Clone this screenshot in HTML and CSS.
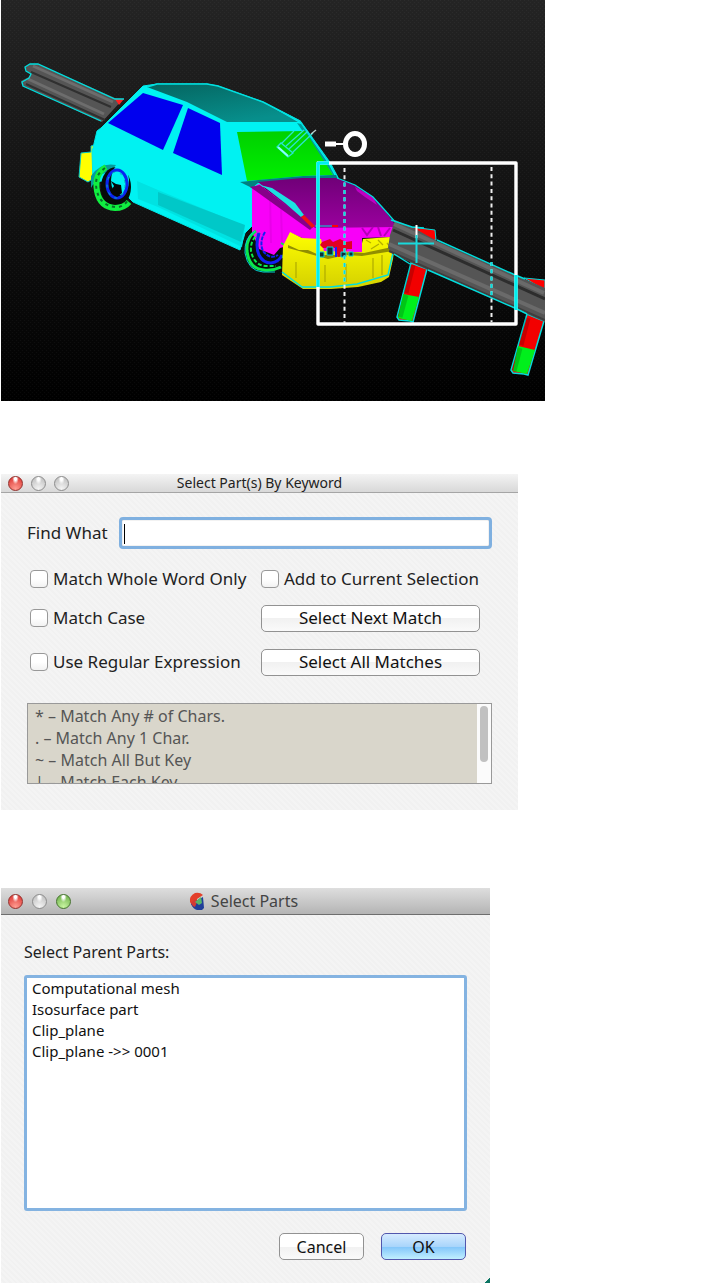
FILE: index.html
```
<!DOCTYPE html>
<html lang="en">
<head>
<meta charset="utf-8">
<title>Select Parts</title>
<link rel="stylesheet" href="styles.css">
</head>
<body>
<main class="page">
<svg class="viewport" viewBox="1 0 544 401" role="img" aria-label="Car model against a guard rail with a selection rectangle">
  <defs>
    <linearGradient id="bg" x1="0" y1="0" x2="0" y2="1"><stop offset="0" stop-color="#242424"/><stop offset=".5" stop-color="#121212"/><stop offset="1" stop-color="#000"/></linearGradient>
    <linearGradient id="roof" x1="0" y1="0" x2=".6" y2="1"><stop offset="0" stop-color="#056560"/><stop offset="1" stop-color="#078f8c"/></linearGradient>
    <linearGradient id="hood" x1="0" y1="0" x2="0" y2="1"><stop offset="0" stop-color="#700078"/><stop offset="1" stop-color="#9a009e"/></linearGradient>
    <linearGradient id="glass" x1="0" y1="0" x2="0" y2="1"><stop offset="0" stop-color="#00d000"/><stop offset="1" stop-color="#00f000"/></linearGradient>
    <linearGradient id="bumper" x1="0" y1="0" x2="0" y2="1"><stop offset="0" stop-color="#ff0"/><stop offset="1" stop-color="#d4d000"/></linearGradient>
    <pattern id="dots" width="4" height="4" patternUnits="userSpaceOnUse"><path d="M0 0h1v1h-1zM2 2h1v1h-1z" fill="#fff" opacity=".035"/></pattern>
  </defs>
  <path d="M1 0h544v401H1z" fill="url(#bg)"/>
  <path d="M1 0h544v401H1z" fill="url(#dots)"/>
  <!-- rear guard rail -->
  <path d="M25 67l5-3 8 0 77 34 8 1-21 23-3-1-77-36-1-4 8-4 2-3-4-3z" fill="#555"/>
  <path d="M28 79l76 35M33 66l80 36" stroke="#6d6d6d" stroke-width="3"/>
  <path d="M31 72l80 35M26 84l79 36" stroke="#303030" stroke-width="2"/>
  <path d="M115 99h9l-5 6z" fill="#f22"/>
  <path d="M124 99h-9L38 64h-8l-5 3 1 4 5 3-2 4-7 4 1 4 78 35" fill="none" stroke="#00dede" stroke-width="1.3"/>
  <!-- body -->
  <path d="M91 146l5-1v34l-5 1-3 2-9-5 2-24 10-1z" fill="#ff0" stroke="#0cc"/>
  <path d="M143 86l14-2h50l11 2 45 16 37 19 30 42 8 15-38 6-44 3-4-1 3 37-10 10-5 17-60-27-47-21-18-18-14-3-8 3-1-32 5-21 4-3z" fill="#00f2f2" stroke="#00e8e8"/>
  <path d="M147 87l10-3h50l11 2 45 16 35 20-71 0-40-20z" fill="url(#roof)"/>
  <path d="M147 87l10-3h50l11 2 45 16 37 19 30 42 8 15" fill="none" stroke="#00e0e0" stroke-width="1.5"/>
  <path d="M137 181l21 9 87 36-3 21-84-40-20-8z" fill="#00e2e2"/>
  <path d="M158 192l87 33-4 17-83-37z" fill="#00c8c8"/>
  <path d="M297 123l4 1 27 39 8 15-32 0 29-3z" fill="#009c9c"/>
  <path d="M143 93l40 12-20 45-55-27z" fill="#0000ee"/>
  <path d="M188 108l32 15 2 52-49-22z" fill="#0000ee"/>
  <path d="M237 132l68-1 28 44-30 1-56 5z" fill="url(#glass)"/>
  <path d="M240 182l18-2 45-4 33-1 2 5-80 3-6 5z" fill="#007f80"/>
  <!-- wheels -->
  <path d="M91 176q9-14 25-11l-4 5-14 6-7 12z" fill="#079b9b"/>
  <ellipse cx="116" cy="187" rx="15" ry="20" fill="#060b08"/>
  <ellipse cx="120" cy="180" rx="9" ry="15" fill="#00f2f2"/>
  <path d="M106 167q-12 7-9 24 3 16 18 17 9 0 14-6" fill="none" stroke="#10ef40" stroke-width="6"/>
  <path d="M105 168q-12 8-8 23 3 14 18 16 8 1 13-7" fill="none" stroke="#086c28" stroke-width="2" stroke-dasharray="3 4"/>
  <ellipse cx="117" cy="184" rx="10" ry="14" fill="none" stroke="#0b25ef" stroke-width="3"/>
  <ellipse cx="116" cy="185" rx="9" ry="13" fill="none" stroke="#0bb" stroke-width="1" stroke-dasharray="3 5"/>
  <path d="M111 181l5 3 5 1 1 8-5 4-6-6 3-5z" fill="#050808"/>
  <ellipse cx="264" cy="252" rx="17" ry="18" fill="#061008"/>
  <!-- hood and nose -->
  <path d="M252 188l7-4 56 43 81-1-2 11-32 1v17l-42-1-18-16-11-5-4 13-7 2-6 7-15-6-7-17z" fill="#f800f8"/>
  <path d="M270 196l1 47M281 206l1 38" stroke="#e900e9" stroke-width="2"/>
  <path d="M258 182l44-4h35l18 7 18 12 9 10 15 20-82 1-5-4-13-9z" fill="url(#hood)"/>
  <path d="M250 187l10-2 41 32 12 10-3 3z" fill="#860089"/>
  <path d="M260 185l12 3 23 15 9 12-3 2-16-14-18-14z" fill="#1ce1e1"/>
  <path d="M304 215l11 11-3 2-11-11z" fill="#ef1111"/>
  <path d="M355 187l18 10 4 8-12-8-8-6z" fill="#c000c4"/>
  <path d="M337 178l18 7 18 12 9 10 15 17" fill="none" stroke="#00dede" stroke-width="1.3"/>
  <path d="M362 228l5 7 6-8M378 227l3 9M384 236l6-8" fill="none" stroke="#b500b8" stroke-width="2"/>
  <!-- front wheel rings -->
  <path d="M256 231q-10 6-9 20 2 18 17 19 9 1 17-3" fill="none" stroke="#0be84c" stroke-width="3"/>
  <path d="M260 233q-10 6-9 18 3 14 14 15l11 0" fill="none" stroke="#0be84c" stroke-width="2" stroke-dasharray="4 2"/>
  <path d="M255 231q-11 7-10 22 3 18 18 19h12" fill="none" stroke="#00cfd2"/>
  <path d="M259 233q-4 13 0 22 4 8 12 8 8-1 11-8" fill="none" stroke="#1020f2" stroke-width="3"/>
  <path d="M265 232q-6 10-2 19 7 9 15 4" fill="none" stroke="#1020f2" stroke-width="2" stroke-dasharray="4 1"/>
  <path d="M281 243l5 3-3 12" fill="none" stroke="#0be84c" stroke-width="2"/>
  <path d="M290 232l12 6 19 1 3 12 36 1 3-13 27-2 5 6-2 16-4 18-8 5-23 5-27 2h-28l-21-14 1-29z" fill="url(#bumper)"/>
  <path d="M288 245l11 5 9 0 11 5 18 0 12-3 15 1 28-6 1 4-31 5-16-1-18 4-29-8-11-3z" fill="#918e00"/>
  <path d="M366 240l5 3M378 240l5 5M371 249l8-5M387 243l4 5M296 262v16M325 265v17M346 264v18M373 258v20M382 255v20" fill="none" stroke="#b3af00" stroke-width="1.3"/>
  <path d="M350 239h12v13h-11z" fill="#f800f8"/>
  <path d="M322 242l8-3 3 3 7-3 6 3 6-1v8h-5l-3 7-6 1-3-9h-12l-3-3z" fill="#e10022"/>
  <path d="M318 252h6v5h-6zm9-5h6v8h-6zm14 5h5v5h-5zm8 0h4v4h-4z" fill="#102f36" stroke="#00d5d5"/>
  <path d="M336 247v10" stroke="#1424ff" stroke-width="2"/>
  <path d="M282 272l20 15 28 0 27-3 31-9 5-22" fill="none" stroke="#00dede" stroke-width="1.5"/>
  <path d="M315 226h19" stroke="#00d8d8"/>
  <path d="M332 226h6" stroke="#f00" stroke-width="2"/>
  <!-- front guard rail and posts -->
  <path d="M411 263l16 6-14 53-3-1-11-1-2-3z" fill="#f20000" stroke="#00dede" stroke-width="1.5"/>
  <path d="M403 294l16 3-7 24-14-3z" fill="#00ef1c"/>
  <path d="M413 265l-7 28M406 295l-6 22" stroke="#000" opacity=".17" stroke-width="5"/>
  <path d="M527 314l17 7-16 54-4-1-11-1-2-3z" fill="#f20000" stroke="#00dede" stroke-width="1.5"/>
  <path d="M518 346l17 4-8 24-14-3z" fill="#00ef1c"/>
  <path d="M528 318l-7 27M520 348l-6 23" stroke="#000" opacity=".17" stroke-width="5"/>
  <path d="M411 227l24 3 1 10-8 1z" fill="#f00" stroke="#00dede"/>
  <path d="M524 278l21 2v10z" fill="#f00" stroke="#00dede"/>
  <path d="M395 220l17 7 25 14 76 33 32 14v34l-29-13-88-39-34-15-6-7 2-13z" fill="#555"/>
  <path d="M394 224l150 69M389 244l156 69" stroke="#6a6a6a" stroke-width="4"/>
  <path d="M393 230l152 69" stroke="#2d2d2d" stroke-width="3"/>
  <path d="M389 251l156 69" stroke="#3e3e3e" stroke-width="2"/>
  <path d="M391 220l21 7 12 1M437 240l76 34 12 5M428 270l89 39 10 5M394 254l16 10" fill="none" stroke="#00dede" stroke-width="1.4"/>
  <!-- selection rectangle and cursors -->
  <path d="M318 163h198v161H318z" fill="none" stroke="#fff" stroke-width="3.400" stroke-linejoin="round"/>
  <path d="M318 162v125M516 275v35M318 163h11" stroke="#00f0f0" stroke-width="3.400"/>
  <path d="M344.500 168v155M491.500 167v155" stroke="#eee" stroke-width="2" stroke-dasharray="4 3.300"/>
  <path d="M344.500 182.600v102M491.500 262v36" stroke="#00dede" stroke-width="2" stroke-dasharray="4 3.300"/>
  <path d="M416.500 225v13" stroke="#fff" stroke-width="2"/>
  <path d="M416.500 235v28M398 243.500h36" stroke="#19d9dc" stroke-width="2"/>
  <path d="M277 147l4-4 12 10-5 4zM282 143l12-12M286 146l18-16M293 152l20-19M289 149l19-18" fill="none" stroke="#2be3cf" stroke-width="1.300"/>
  <path d="M278 147l10 9" stroke="#8ff" stroke-width="2"/><path d="M311 134l5-4" stroke="#bcc" stroke-width="1.500"/>
  <path d="M325 141.500h11v5h-11z" fill="#fff"/><path d="M336 144h9" stroke="#fff" stroke-width="2"/>
  <ellipse cx="355" cy="144" rx="9.500" ry="10.500" fill="none" stroke="#fff" stroke-width="5"/>
</svg>

<section class="window keyword-window" aria-label="Select Part(s) By Keyword">
  <header class="titlebar">
    <div class="lights"><button class="light red" aria-label="Close"></button><button class="light" aria-label="Minimize"></button><button class="light" aria-label="Zoom"></button></div>
    <h1 class="title">Select Part(s) By Keyword</h1>
  </header>
  <form class="keyword-body">
    <div class="find">
      <label for="find">Find What</label>
      <span class="find-box"><input id="find" type="text"><i class="caret"></i></span>
    </div>
    <div class="options">
      <label class="check"><input type="checkbox">Match Whole Word Only</label>
      <label class="check"><input type="checkbox">Add to Current Selection</label>
      <label class="check"><input type="checkbox">Match Case</label>
      <button type="button" class="button">Select Next Match</button>
      <label class="check"><input type="checkbox">Use Regular Expression</label>
      <button type="button" class="button">Select All Matches</button>
    </div>
    <div class="help">
      <ul class="help-lines"><li>* – Match Any # of Chars.</li><li>. – Match Any 1 Char.</li><li>~ – Match All But Key</li><li>| – Match Each Key</li></ul>
      <div class="track"><div class="thumb"></div></div>
    </div>
  </form>
</section>

<section class="window parts-window" aria-label="Select Parts">
  <header class="titlebar tall">
    <div class="lights"><button class="light red" aria-label="Close"></button><button class="light" aria-label="Minimize"></button><button class="light green" aria-label="Zoom"></button></div>
    <svg class="logo" viewBox="0 0 16 18" aria-hidden="true"><path d="M14 3Q11 0 6 1 0 4 1 10l3 5 4-4 0-4z" fill="#e3402b"/><path d="M2 12l5-3 7-4 1 11-2 2H8Q4 17 2 12z" fill="#203f99"/><path d="M2 11l4-4 2 3-2 5q-3-1-4-4z" fill="#d33a34"/><path d="M12 5l1 6-3 2-4-3z" fill="#58b56a"/></svg>
    <h1 class="title">Select Parts</h1>
  </header>
  <form class="parts-body">
    <label for="parts">Select Parent Parts:</label>
    <select id="parts" class="parts" multiple size="4"><option>Computational mesh</option><option>Isosurface part</option><option>Clip_plane</option><option>Clip_plane -&gt;&gt; 0001</option></select>
    <div class="actions"><button type="button" class="button">Cancel</button><button type="button" class="button primary">OK</button></div>
  </form>
</section>
</main>
</body>
</html>
```
FILE: styles.css
```
* { box-sizing: border-box; }
body { margin: 0; background: #fff; color: #222; font-family: "Noto Sans", "Open Sans", sans-serif; font-size: 17px; line-height: 22px; }
.page { display: flex; flex-direction: column; padding-left: 1px; }
.viewport { display: block; width: 100%; max-width: 544px; }
.window { width: 100%; background: repeating-linear-gradient(45deg, #f4f4f4 0 2px, #f1f1f1 2px 4px); }
.keyword-window { max-width: 517px; margin-top: 73px; }
.parts-window { max-width: 489px; margin-top: 78px; background: linear-gradient(315deg, #0c7563 0 4px, transparent 4px), repeating-linear-gradient(45deg, #f4f4f4 0 2px, #f1f1f1 2px 4px); }
.titlebar { position: relative; display: flex; align-items: center; justify-content: center; gap: 6px; height: 19px; border-bottom: 1px solid #a5a5a5; background: linear-gradient(#f4f4f4, #d8d8d8); }
.titlebar.tall { height: 27px; padding-right: 4px; border-bottom-color: #6e6e6e; background: linear-gradient(#dedede, #b4b4b4); }
.title { margin: 0; font-size: 14px; font-weight: 400; line-height: 16px; }
.tall .title { font-size: 16px; line-height: 22px; color: #444; }
.logo { width: 16px; height: 18px; }
.lights { position: absolute; left: 7px; display: flex; gap: 8px; }
.tall .lights { gap: 9px; }
.light { width: 15px; height: 15px; padding: 0; border: 1px solid #8d8d8d; border-radius: 50%; background: radial-gradient(ellipse at 50% 15%, #fff 0 12%, transparent 35%), radial-gradient(circle at 50% 90%, #f4f4f4, #b9b9b9); }
.light.red { border-color: #93312d; background: radial-gradient(ellipse at 50% 12%, #fff 0 12%, transparent 35%), radial-gradient(circle at 50% 90%, #ff9d92, #d92c29); }
.light.green { border-color: #46742f; background: radial-gradient(ellipse at 50% 12%, #fff 0 12%, transparent 35%), radial-gradient(circle at 50% 90%, #c9f5a2, #64a941); }
.keyword-body { padding: 24px 26px 26px; }
.find { display: flex; align-items: center; gap: 11px; }
.find-box { position: relative; flex: 1; display: flex; }
.find-box input { width: 100%; height: 32px; padding: 0 6px; border: 3px solid #7fb0e0; border-radius: 4px; background: #fff; font: inherit; outline: 0; box-shadow: inset 0 0 1px #777; }
.caret { position: absolute; left: 5px; top: 7px; width: 1px; height: 20px; background: #000; }
.options { display: grid; grid-template-columns: 234px 219px; grid-template-rows: 32px 46px 42px; align-items: center; margin: 14px 0 20px; }
.check { display: flex; align-items: center; gap: 5px; white-space: nowrap; }
.check input { appearance: none; flex: none; width: 18px; height: 18px; margin: 0; border: 1px solid #989898; border-radius: 4px; background: linear-gradient(#fff 50%, #f2f2f2); }
.check:nth-child(odd) input { margin-left: 3px; }
.button { height: 27px; padding: 0; border: 1px solid #929292; border-radius: 5px; background: linear-gradient(#fff 50%, #f1f1f1 50%, #fafafa); color: #111; font: inherit; line-height: 22px; }
.help { display: flex; height: 81px; overflow: hidden; border: 1px solid #999; background: #d9d6cb; font-size: 16px; }
.help-lines { flex: 1; margin: 0; padding: 1px 7px; list-style: none; color: #555; }
.track { width: 14px; padding: 2px 3px; background: #fbfbfb; }
.thumb { width: 8px; height: 56px; border-radius: 4px; background: #c1c1c1; }
.parts-body { display: flex; flex-direction: column; padding: 26px 23px 23px; font-size: 16px; }
.parts { height: 236px; margin: 12px 0 22px; padding: 0 5px; border: 3px solid #84b3e1; border-radius: 3px; background: #fff; color: #111; font: inherit; font-size: 15px; outline: 0; overflow: hidden; }
.parts option { height: 21px; min-height: 21px; padding: 0; line-height: 21px; }
.actions { display: flex; justify-content: flex-end; gap: 17px; padding-right: 1px; }
.actions .button { width: 85px; }
.button.primary { border-color: #5257ad; background: linear-gradient(#d6ebff, #a9d5fb 50%, #80c4fa 50%, #c0efff); }
```
